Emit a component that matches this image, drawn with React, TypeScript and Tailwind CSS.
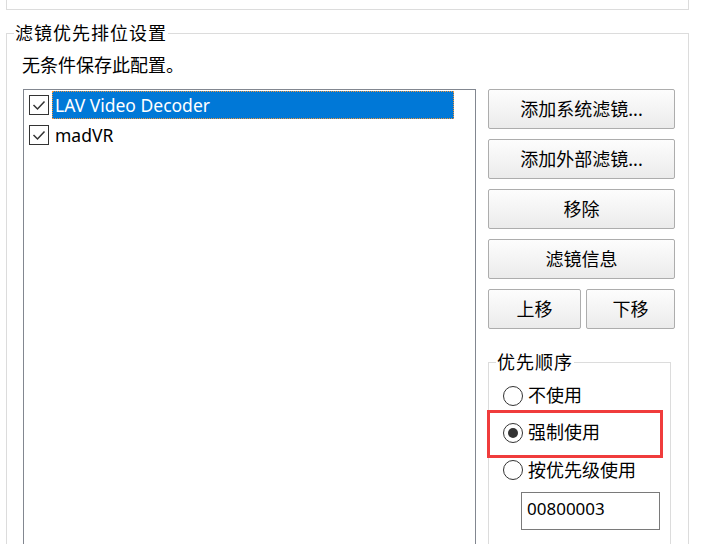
import React from "react"

const font = { fontFamily: '"Noto Sans", "Noto Sans CJK SC", sans-serif' }

const Check = () => (
  <span className="w-[20px] h-[20px] border border-[#333333] bg-white flex items-center justify-center shrink-0">
    <svg width="14" height="14" viewBox="0 0 14 14" fill="none">
      <path d="M1.5 7 L5.5 11 L12.5 3.5" stroke="#333333" strokeWidth="1.5" />
    </svg>
  </span>
)

const Radio = ({ checked }: { checked?: boolean }) => (
  <span className="w-[20px] h-[20px] rounded-full border border-[#333333] bg-white flex items-center justify-center shrink-0">
    {checked && <span className="w-[10px] h-[10px] rounded-full bg-[#333333]" />}
  </span>
)

const Btn = ({ label, className }: { label: string; className?: string }) => (
  <button
    type="button"
    className={
      "h-[40px] border border-[#adadad] rounded-[2px] bg-gradient-to-b from-[#fdfdfd] to-[#ebebeb] text-[18px] leading-none text-black flex items-center justify-center " +
      (className ?? "")
    }
  >
    {label}
  </button>
)

export default function App() {
  return (
    <div className="w-[708px] h-[544px] bg-white overflow-hidden text-black" style={font}>
      {/* 上方面板的底边 */}
      <div className="ml-[6px] w-[683px] h-[10px] border-x border-b border-[#dcdcdc]" />

      {/* 滤镜优先排位设置 */}
      <fieldset className="ml-[6px] mt-[14px] w-[683px] h-[560px] border border-[#dcdcdc] pl-[7px]">
        <legend className="px-px text-[18px] leading-[18px] tracking-[1px]">滤镜优先排位设置</legend>
        <div className="ml-[8px] mt-[11px] text-[18px] leading-[24px]">无条件保存此配置。</div>

        <div className="flex mt-[12px] ml-[9px]">
          {/* 列表 */}
          <div className="w-[453px] h-[470px] border border-[#828790] bg-white">
            <div className="flex items-center h-[30px] pl-[5px]">
              <Check />
              <span className="ml-[3px] w-[402px] h-[28px] bg-[#0078d7] outline-1 outline-dotted outline-[#f0963c] -outline-offset-1 text-white text-[17.5px] leading-[28px] pl-[3px]">
                LAV Video Decoder
              </span>
            </div>
            <div className="flex items-center h-[30px] pl-[5px]">
              <Check />
              <span className="ml-[3px] text-[17.5px] leading-[28px] pl-[3px]">madVR</span>
            </div>
          </div>

          {/* 按钮列 */}
          <div className="ml-[12px] w-[187px] flex flex-col">
            <Btn label="添加系统滤镜..." />
            <Btn label="添加外部滤镜..." className="mt-[10px]" />
            <Btn label="移除" className="mt-[10px]" />
            <Btn label="滤镜信息" className="mt-[10px]" />
            <div className="flex mt-[10px] gap-[5px]">
              <Btn label="上移" className="w-[93px]" />
              <Btn label="下移" className="w-[89px]" />
            </div>

            {/* 优先顺序 */}
            <fieldset className="mt-[24px] w-[183px] h-[200px] border border-[#dcdcdc] pl-[7px]">
              <legend className="px-px text-[18px] leading-[18px] tracking-[1px]">优先顺序</legend>
              <div className="pt-[6px] text-[18px]">
                <div className="h-[37px] flex items-center ml-[7px] gap-[5px]">
                  <Radio />
                  <span>不使用</span>
                </div>
                <div className="relative h-[37px] flex items-center ml-[7px] gap-[5px]">
                  <Radio checked />
                  <span>强制使用</span>
                  <div className="absolute left-[-16px] top-[-4px] w-[176px] h-[48px] border-[3px] border-[#f03c3c]" />
                </div>
                <div className="h-[38px] flex items-center ml-[7px] gap-[5px]">
                  <Radio />
                  <span>按优先级使用</span>
                </div>
                <div className="mt-[3px] ml-[25px] w-[139px] h-[38px] border border-[#7a7a7a] bg-white flex items-center pl-[5px] pb-[4px] text-[17px]">
                  00800003
                </div>
              </div>
            </fieldset>
          </div>
        </div>
      </fieldset>
    </div>
  )
}
